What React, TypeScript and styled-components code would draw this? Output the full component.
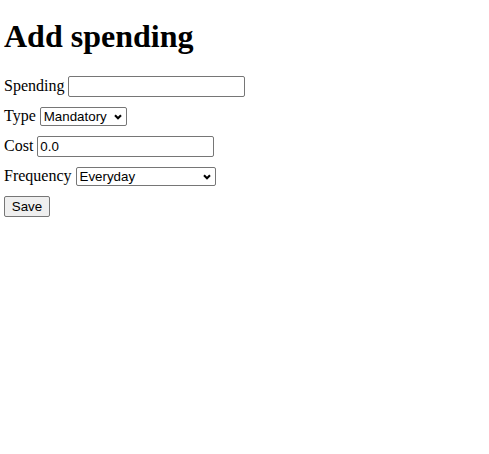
import React from "react";
import styled, { createGlobalStyle } from "styled-components";

const GlobalStyle = createGlobalStyle`
  html, body { margin: 0; padding: 0; background: #ffffff; }
  body { font-family: "Liberation Serif", "Times New Roman", serif; font-size: 16px; color: #000; }
`;

const Page = styled.div`
  padding: 0 4px;
`;

const Title = styled.h1`
  font-size: 32px;
  font-weight: bold;
  margin: 18px 0 21px;
  line-height: normal;
`;

const Form = styled.form`
  display: flex;
  flex-direction: column;
  align-items: flex-start;
  gap: 10px;
`;

const Row = styled.div`
  display: flex;
  align-items: baseline;
  gap: 4px;
`;

const Label = styled.label`
  font-size: 16px;
`;

const controlFont = `
  font-family: "Liberation Sans", Arial, sans-serif;
  font-size: 13.333px;
  color: #000;
`;

const TextInput = styled.input<{ $w: number }>`
  ${controlFont}
  box-sizing: border-box;
  width: ${(p) => p.$w}px;
  height: 21px;
  padding: 1px 2px;
  border: 1px solid #767676;
  border-radius: 2px;
  background: #fff;
  outline: none;
`;

const SelectWrap = styled.span`
  position: relative;
  display: inline-flex;
`;

const Select = styled.select<{ $w: number }>`
  ${controlFont}
  appearance: none;
  -webkit-appearance: none;
  box-sizing: border-box;
  width: ${(p) => p.$w}px;
  height: 19px;
  padding: 0 16px 0 3px;
  border: 1px solid #767676;
  border-radius: 2px;
  background: #fff;
  outline: none;
`;

const Chevron = styled.svg`
  position: absolute;
  right: 5px;
  top: 50%;
  margin-top: -3px;
  pointer-events: none;
`;

const Button = styled.button`
  ${controlFont}
  box-sizing: border-box;
  width: 46px;
  height: 21px;
  padding: 1px 6px;
  border: 1px solid #767676;
  border-radius: 2px;
  background: #efefef;
`;

const Arrow = () => (
  <Chevron width="8" height="6" viewBox="0 0 8 6">
    <path d="M1 1.2 L4 4.2 L7 1.2" fill="none" stroke="#000" strokeWidth="2.1" strokeLinecap="butt" />
  </Chevron>
);

export default function App() {
  return (
    <>
      <GlobalStyle />
      <Page>
        <Title>Add spending</Title>
        <Form onSubmit={(e) => e.preventDefault()}>
          <Row>
            <Label htmlFor="spending">Spending</Label>
            <TextInput id="spending" type="text" $w={177} defaultValue="" />
          </Row>
          <Row>
            <Label htmlFor="type">Type</Label>
            <SelectWrap>
              <Select id="type" $w={87} defaultValue="Mandatory">
                <option>Mandatory</option>
                <option>Optional</option>
              </Select>
              <Arrow />
            </SelectWrap>
          </Row>
          <Row>
            <Label htmlFor="cost">Cost</Label>
            <TextInput id="cost" type="text" $w={177} defaultValue="0.0" />
          </Row>
          <Row>
            <Label htmlFor="frequency">Frequency</Label>
            <SelectWrap>
              <Select id="frequency" $w={140} defaultValue="Everyday">
                <option>Everyday</option>
                <option>Weekly</option>
                <option>Monthly</option>
              </Select>
              <Arrow />
            </SelectWrap>
          </Row>
          <Row>
            <Button type="submit">Save</Button>
          </Row>
        </Form>
      </Page>
    </>
  );
}
